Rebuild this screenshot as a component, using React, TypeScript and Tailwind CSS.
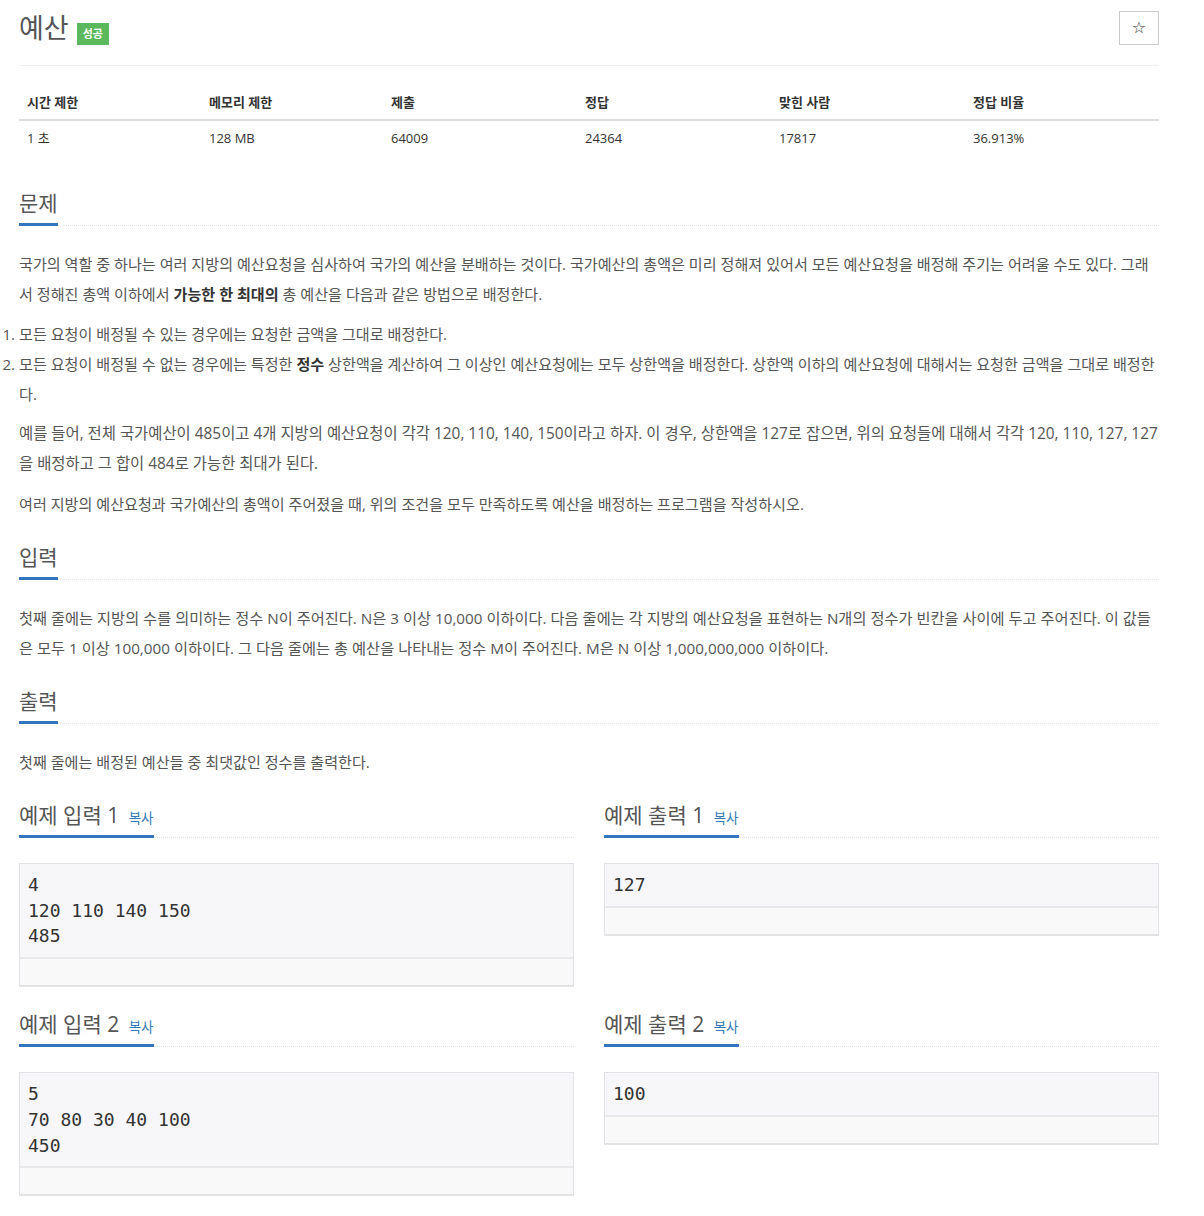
import React from 'react';

const stats = [
    { label: '시간 제한', value: '1 초', w: 'w-[182px]' },
    { label: '메모리 제한', value: '128 MB', w: 'w-[182px]' },
    { label: '제출', value: '64009', w: 'w-[194px]' },
    { label: '정답', value: '24364', w: 'w-[194px]' },
    { label: '맞힌 사람', value: '17817', w: 'w-[194px]' },
    { label: '정답 비율', value: '36.913%', w: 'w-[194px]' },
];

const Headline = ({ title, copy }: { title: string; copy?: boolean }) => (
    <div className="border-b border-dotted border-[#dfe3ea]">
        <h2 className="inline-block -mb-px pb-[4px] border-b-[3px] border-[#3376bf] text-[21px] leading-[32px] font-normal text-[#555]">
            {title}
            {copy && <span className="ml-[4px] text-[13.5px] leading-none text-[#337ab7] cursor-pointer">복사</span>}
        </h2>
    </div>
);

const Sample = ({ title, data }: { title: string; data: string }) => (
    <section>
        <Headline title={title} copy />
        <div className="mt-[25px] border border-[#e1e1e8] border-b-2 border-b-[#e3e3e6] bg-[#f7f7f9]">
            <pre className="px-[8px] pt-[8px] pb-[8px] font-['DejaVu_Sans_Mono',monospace] text-[18px] leading-[25.7px] text-[#333] whitespace-pre">
                {data}
            </pre>
            <div className="h-[28px] border-t-2 border-[#e8e8ea] bg-[#f9f9f9]" />
        </div>
    </section>
);

const App = () => {
    return (
        <div className="bg-white min-h-[1216px] font-['Open_Sans','Noto_Sans_CJK_KR',sans-serif] text-[15.1px] text-[#555]">
            <div className="w-[1140px] ml-[19px]">
                {/* Title */}
                <div className="flex justify-between items-start pt-[10px] pb-[19px] border-b border-[#eee]">
                    <div className="flex items-end gap-[8px]">
                        <h1 className="text-[27px] leading-[36px] font-normal text-[#555]">예산</h1>
                        <span className="mb-[1px] h-[22px] px-[6px] flex items-center bg-[#5cb85c] text-white text-[11px] font-bold">성공</span>
                    </div>
                    <button className="mt-[1px] w-[40px] h-[34px] border border-[#ccc] flex items-center justify-center text-[16px] text-[#333] font-['DejaVu_Sans',sans-serif]">
                        ☆
                    </button>
                </div>

                {/* Stats table */}
                <table className="mt-[19px] w-full border-collapse text-left">
                    <thead>
                        <tr className="border-b-2 border-[#ddd]">
                            {stats.map((s) => (
                                <th key={s.label} className={`${s.w} px-[8px] py-[8px] leading-[18px] text-[13px] font-bold text-[#333]`}>
                                    {s.label}
                                </th>
                            ))}
                        </tr>
                    </thead>
                    <tbody>
                        <tr>
                            {stats.map((s) => (
                                <td key={s.label} className="px-[8px] py-[8px] leading-[18px] text-[13px] text-[#333]">
                                    {s.value}
                                </td>
                            ))}
                        </tr>
                    </tbody>
                </table>

                {/* 문제 */}
                <section className="mt-[32px]">
                    <Headline title="문제" />
                    <div className="mt-[23px] flex flex-col gap-[10px] leading-[30px]">
                        <p>
                            국가의 역할 중 하나는 여러 지방의 예산요청을 심사하여 국가의 예산을 분배하는 것이다. 국가예산의 총액은 미리 정해져 있어서 모든 예산요청을 배정해 주기는 어려울 수도 있다. 그래서 정해진 총액 이하에서 <strong className="font-bold text-[#333]">가능한 한 최대의</strong> 총 예산을 다음과 같은 방법으로 배정한다.
                        </p>
                        <ol className="list-decimal pl-0 list-outside">
                            <li>모든 요청이 배정될 수 있는 경우에는 요청한 금액을 그대로 배정한다.</li>
                            <li>
                                모든 요청이 배정될 수 없는 경우에는 특정한 <strong className="font-bold text-[#333]">정수</strong> 상한액을 계산하여 그 이상인 예산요청에는 모두 상한액을 배정한다. 상한액 이하의 예산요청에 대해서는 요청한 금액을 그대로 배정한다.
                            </li>
                        </ol>
                        <p className="text-[15.4px]">
                            예를 들어, 전체 국가예산이 485이고 4개 지방의 예산요청이 각각 120, 110, 140, 150이라고 하자. 이 경우, 상한액을 127로 잡으면, 위의 요청들에 대해서 각각 120, 110, 127, 127을 배정하고 그 합이 484로 가능한 최대가 된다.
                        </p>
                        <p>여러 지방의 예산요청과 국가예산의 총액이 주어졌을 때, 위의 조건을 모두 만족하도록 예산을 배정하는 프로그램을 작성하시오.</p>
                    </div>
                </section>

                {/* 입력 */}
                <section className="mt-[22px]">
                    <Headline title="입력" />
                    <div className="mt-[23px] leading-[30px]">
                        <p className="text-[15.25px]">
                            첫째 줄에는 지방의 수를 의미하는 정수 N이 주어진다. N은 3 이상 10,000 이하이다. 다음 줄에는 각 지방의 예산요청을 표현하는 N개의 정수가 빈칸을 사이에 두고 주어진다. 이 값들은 모두 1 이상 100,000 이하이다. 그 다음 줄에는 총 예산을 나타내는 정수 M이 주어진다. M은 N 이상 1,000,000,000 이하이다.
                        </p>
                    </div>
                </section>

                {/* 출력 */}
                <section className="mt-[22px]">
                    <Headline title="출력" />
                    <div className="mt-[23px] leading-[30px]">
                        <p>첫째 줄에는 배정된 예산들 중 최댓값인 정수를 출력한다.</p>
                    </div>
                </section>

                {/* Samples */}
                <div className="mt-[22px] grid grid-cols-2 gap-x-[30px] items-start">
                    <Sample title="예제 입력 1 " data={'4\n120 110 140 150\n485'} />
                    <Sample title="예제 출력 1 " data="127" />
                </div>
                <div className="mt-[21px] grid grid-cols-2 gap-x-[30px] items-start">
                    <Sample title="예제 입력 2 " data={'5\n70 80 30 40 100\n450'} />
                    <Sample title="예제 출력 2 " data="100" />
                </div>
            </div>
        </div>
    );
};

export default App;
